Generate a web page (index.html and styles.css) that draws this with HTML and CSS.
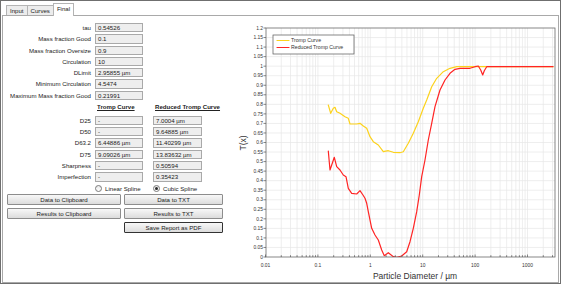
FILE: index.html
```html
<!DOCTYPE html>
<html lang="en">
<head>
    <meta charset="UTF-8">
    <title>Final</title>
    <link rel="stylesheet" href="styles.css">
</head>
<body>
<div class="frame">
    <div class="tabs">
        <div class="tab">Input</div>
        <div class="tab">Curves</div>
        <div class="tab active">Final</div>
    </div>
    <div class="panel">
        <div class="form">
            <div class="params">
                <label>tau</label><div class="field">0.54526</div>
                <label>Mass fraction Good</label><div class="field">0.1</div>
                <label>Mass fraction Oversize</label><div class="field">0.9</div>
                <label>Circulation</label><div class="field">10</div>
                <label>DLimit</label><div class="field">2.95855 µm</div>
                <label>Minimum Circulation</label><div class="field">4.5474</div>
                <label>Maximum Mass fraction Good</label><div class="field">0.21991</div>
            </div>
            <div class="curves">
                <span></span><div class="head">Tromp Curve</div><div class="head">Reduced Tromp Curve</div>
                <label>D25</label><div class="field">-</div><div class="field">7.0004 µm</div>
                <label>D50</label><div class="field">-</div><div class="field">9.64885 µm</div>
                <label>D63.2</label><div class="field">6.44886 µm</div><div class="field">11.40299 µm</div>
                <label>D75</label><div class="field">9.09026 µm</div><div class="field">13.83632 µm</div>
                <label>Sharpness</label><div class="field">-</div><div class="field">0.50594</div>
                <label>Imperfection</label><div class="field">-</div><div class="field">0.35423</div>
                <span></span>
                <div class="radio"><span class="dot"></span>Linear Spline</div>
                <div class="radio"><span class="dot on"></span>Cubic Spline</div>
            </div>
            <div class="buttons">
                <button>Data to Clipboard</button><button>Data to TXT</button>
                <button>Results to Clipboard</button><button>Results to TXT</button>
                <span></span><button class="default">Save Report as PDF</button>
            </div>
        </div>

        <svg id="chart" class="chart" viewBox="230 16 328 266" width="328" height="266" xmlns="http://www.w3.org/2000/svg">
            <defs>
                <clipPath id="plotClip"><rect x="266" y="28" width="289" height="229"></rect></clipPath>
            </defs>
            <g id="grid"></g>
            <g clip-path="url(#plotClip)">
                <polyline class="curve tromp" points="328.3,105 330.7,113.3 333.3,108.3 335,107.3 336.7,111.7 340,113.3 345,116.7 348.3,118.3 350,124 356.7,124 360,123.3 363.3,126 366.7,128.3 370,136.7 373.3,141.7 378.3,145 383.3,151.7 388.3,150.7 393.3,152.3 400,152.7 403.3,151.7 408.3,143.3 413.3,133.3 418.3,121.7 423.3,108.3 426.7,100 431.7,86.7 436.7,78.3 443.3,71.7 450,68.3 456.7,66.7 553,66.7"></polyline>
                <polyline class="curve reduced" points="328.3,151 330,170 331.7,165 334.3,157.3 336.7,166.7 340,170 343.3,175 346,176.7 348.3,188.3 351.7,193.3 356.7,194 360,190.7 363.3,195.5 365,198.3 366.7,203.3 368.3,211.7 371.7,228.3 375,235 378.3,240 381.7,250 384.3,255.7 388.3,252.7 393.3,256.7 396.7,257.3 401.7,256 406.7,251.7 410,241.7 413.3,228.3 416.7,211.7 419.3,195 421.7,176.7 425,160 428.3,140 431.7,123.3 435,106.7 440,90 445,80 450,73.3 455,69.3 460,68.3 470,68.3 475,66.7 478.3,66 480.7,70 482.7,75 484.3,70.7 486.7,66.7 553,66.7"></polyline>
            </g>
            <rect class="plot-border" x="266" y="28" width="289" height="229"></rect>
            <g id="ticks"></g>

            <!-- legend -->
            <rect class="legend" x="273" y="35" width="81" height="19"></rect>
            <line class="curve tromp" x1="277" y1="40.5" x2="289" y2="40.5"></line>
            <line class="curve reduced" x1="277" y1="47.5" x2="289" y2="47.5"></line>
            <text class="legend-text" x="291" y="42.3">Tromp Curve</text>
            <text class="legend-text" x="291" y="49.3">Reduced Tromp Curve</text>

            <text class="axis-title" x="415" y="279" text-anchor="middle">Particle Diameter / µm</text>
            <text class="axis-title" x="246" y="143" text-anchor="middle" transform="rotate(-90 246 143)">T(x)</text>
        </svg>
    </div>
</div>

<script>
    document.addEventListener("DOMContentLoaded", function() {
        const NS = "http://www.w3.org/2000/svg";
        const grid = document.getElementById("grid");
        const ticks = document.getElementById("ticks");

        // plot area: 0.01 .. ~3300 um (log), 0 .. 1.2
        const left = 266, right = 555, top = 28, bottom = 257;

        function xPos(d) {
            return 265.5 + (Math.log10(d) + 2) * 52.4;
        }

        function yPos(v) {
            return bottom - v * (bottom - top) / 1.2;
        }

        function add(parent, tag, attrs, text) {
            const el = document.createElementNS(NS, tag);
            for (const key in attrs) {
                el.setAttribute(key, attrs[key]);
            }
            if (text !== undefined) el.textContent = text;
            parent.appendChild(el);
            return el;
        }

        // horizontal grid + y ticks
        for (let i = 0; i <= 24; i++) {
            const y = yPos(i * 0.05);
            if (i > 0 && i < 24) {
                add(grid, "line", { class: "grid-line", x1: left, y1: y, x2: right, y2: y });
            }
            add(ticks, "line", { class: "tick", x1: left - 2.5, y1: y, x2: left, y2: y });
            const label = parseFloat((i * 0.05).toFixed(2)).toString();
            add(ticks, "text", { class: "tick-label", x: left - 3, y: y + 1.7, "text-anchor": "end" }, label);
        }

        // vertical log grid + x ticks
        for (let e = -2; e <= 3; e++) {
            for (let k = 1; k <= 9; k++) {
                const x = xPos(k * Math.pow(10, e));
                if (x > right) break;
                if (x > left + 1) {
                    add(grid, "line", { class: "grid-line", x1: x, y1: top, x2: x, y2: bottom });
                }
                add(ticks, "line", { class: "tick", x1: x, y1: bottom - (k === 1 ? 2.5 : 1.8), x2: x, y2: bottom });
                if (k === 1) {
                    const label = e < 0 ? Math.pow(10, e).toFixed(-e) : String(Math.pow(10, e));
                    add(ticks, "text", { class: "tick-label", x: x, y: 266.5, "text-anchor": "middle" }, label);
                }
            }
        }
    });
</script>
</body>
</html>
```

FILE: styles.css
```css
body {
    margin: 0;
    background-color: #ffffff;
    font-family: "Liberation Sans", Arial, sans-serif;
    font-size: 6.1px;
    color: #222;
}

.frame {
    width: 561px;
    height: 284px;
    box-sizing: border-box;
    border: 1px solid #6f6f6f;
    padding: 0 1px;
    background-color: #fff;
}

/* Tab strip */
.tabs {
    display: flex;
    align-items: flex-end;
    height: 14px;
    padding-left: 4px;
}

.tab {
    height: 9px;
    line-height: 9px;
    padding: 0 3px;
    border: 1px solid #b4b4b4;
    border-bottom: none;
    background-color: #ececec;
    margin-right: -1px;
}

.tab.active {
    position: relative;
    z-index: 1;
    height: 12px;
    line-height: 10px;
    margin-bottom: -1px;
    background-color: #fff;
}

.panel {
    display: flex;
    height: 268px;
    box-sizing: border-box;
    border: 1px solid #a9a9a9;
}

/* Left form */
.form {
    width: 227px;
    flex-shrink: 0;
}

.params {
    display: grid;
    grid-template-columns: 88px 48px;
    grid-auto-rows: 9.3px;
    column-gap: 4px;
    row-gap: 2px;
    padding-top: 7px;
}

.curves {
    display: grid;
    grid-template-columns: 88px 54px 49px;
    grid-template-rows: 11.7px;
    grid-auto-rows: 9.3px;
    column-gap: 4px;
    row-gap: 2px;
    margin-top: 2px;
}

label {
    text-align: right;
    line-height: 9.3px;
    white-space: nowrap;
}

.field {
    width: 48px;
    height: 9.3px;
    box-sizing: border-box;
    border: 1px solid #a9a9a9;
    background-color: #eeeeee;
    padding-left: 2px;
    line-height: 7.3px;
    white-space: nowrap;
}

.curves .field:nth-child(3n) {
    width: 49px;
}

.head {
    font-weight: bold;
    text-decoration: underline;
    line-height: 9.3px;
    padding-left: 2px;
    white-space: nowrap;
}

.radio {
    display: flex;
    align-items: center;
    gap: 3px;
    white-space: nowrap;
}

.dot {
    width: 7px;
    height: 7px;
    box-sizing: border-box;
    border: 1px solid #7a7a7a;
    border-radius: 50%;
    background: linear-gradient(#e9e9e9, #ffffff);
    position: relative;
}

.dot.on::after {
    content: "";
    position: absolute;
    left: 1px;
    top: 1px;
    width: 3px;
    height: 3px;
    border-radius: 50%;
    background-color: #2a2a2a;
}

.buttons {
    display: grid;
    grid-template-columns: 114px 99px;
    grid-auto-rows: 11px;
    gap: 3px;
    margin: 1px 0 0 4px;
}

button {
    font-family: "Liberation Sans", Arial, sans-serif;
    font-size: 6.1px;
    color: #222;
    padding: 0;
    border: 1px solid #8d8d8d;
    border-radius: 1px;
    background: linear-gradient(#f8f8f8, #dcdcdc);
}

button.default {
    border-color: #333;
}

/* Chart */
.chart {
    display: block;
}

.grid-line {
    stroke: #e6e6e6;
    stroke-width: 0.7;
}

.plot-border {
    fill: none;
    stroke: #6a6a6a;
    stroke-width: 0.8;
}

.tick {
    stroke: #555;
    stroke-width: 0.7;
}

.tick-label {
    font-family: "Liberation Sans", Arial, sans-serif;
    font-size: 4.9px;
    fill: #333;
}

.curve {
    fill: none;
    stroke-width: 1.2;
    stroke-linejoin: round;
    stroke-linecap: round;
}

.curve.tromp {
    stroke: #fcd21c;
}

.curve.reduced {
    stroke: #ff2424;
}

.legend {
    fill: #fff;
    stroke: #555;
    stroke-width: 0.7;
}

.legend-text {
    font-family: "Liberation Sans", Arial, sans-serif;
    font-size: 5.2px;
    fill: #333;
}

.axis-title {
    font-family: "Liberation Sans", Arial, sans-serif;
    font-size: 8.5px;
    fill: #333;
}
```
